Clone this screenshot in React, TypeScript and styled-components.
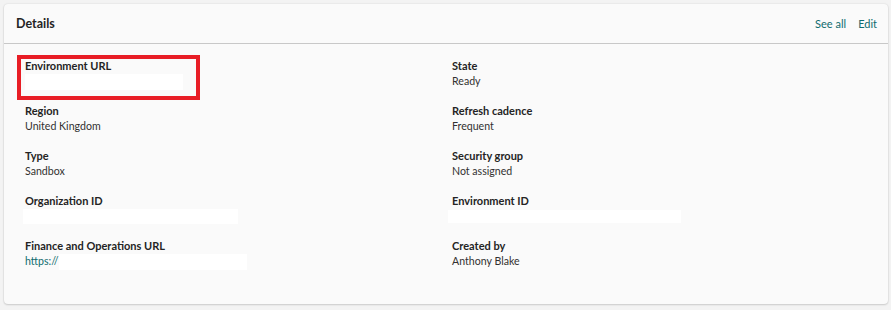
import React from "react";
import styled, { createGlobalStyle } from "styled-components";

const Global = createGlobalStyle`
  html, body { margin: 0; padding: 0; background: #f3f3f3; }
  body { font-family: Lato, "Open Sans", sans-serif; color: #323130; }
  * { box-sizing: border-box; }
`;

const Page = styled.div`
  padding: 4px;
  width: 891px;
  height: 310px;
`;

const Card = styled.section`
  width: 884px;
  height: 300px;
  background: #fafafa;
  border-radius: 4px;
  box-shadow: 0 0 2px rgba(0, 0, 0, 0.12), 0 1px 2px rgba(0, 0, 0, 0.14);
  display: flex;
  flex-direction: column;
`;

const Header = styled.header`
  height: 40px;
  display: flex;
  align-items: center;
  justify-content: space-between;
  padding: 0 11px 0 12px;
  border-bottom: 1px solid #c8c8c8;
`;

const Title = styled.h2`
  margin: 0;
  font-size: 12.5px;
  font-weight: 700;
  color: #242424;
  line-height: 16px;
`;

const Actions = styled.div`
  display: flex;
  gap: 12px;
`;

const LinkButton = styled.a`
  font-size: 11px;
  color: #0f6b6e;
  text-decoration: none;
  line-height: 16px;
  cursor: pointer;
`;

const Body = styled.div`
  display: grid;
  grid-template-columns: 427px 1fr;
  row-gap: 14px;
  padding: 14px 21px 0 21px;
`;

const Item = styled.div`
  position: relative;
  display: flex;
  flex-direction: column;
`;

const Label = styled.div`
  font-size: 11px;
  font-weight: 700;
  line-height: 16px;
  color: #242424;
`;

const Value = styled.div`
  font-size: 10.6px;
  line-height: 15px;
  height: 15px;
  display: flex;
  align-items: center;
  color: #323130;
`;

const ValueLink = styled.span`
  color: #0f6b6e;
`;

const Redact = styled.span<{ $w: number; $h: number; $shift: number }>`
  display: inline-block;
  width: ${(p) => p.$w}px;
  height: ${(p) => p.$h}px;
  margin-left: ${(p) => p.$shift}px;
  background: #ffffff;
`;

const Highlight = styled.div`
  position: absolute;
  left: -8px;
  top: -3px;
  width: 183px;
  height: 45px;
  border: 4px solid #e81d25;
  pointer-events: none;
`;

export default function App() {
  return (
    <>
      <Global />
      <Page>
        <Card>
          <Header>
            <Title>Details</Title>
            <Actions>
              <LinkButton>See all</LinkButton>
              <LinkButton>Edit</LinkButton>
            </Actions>
          </Header>
          <Body>
            <Item>
              <Label>Environment URL</Label>
              <Value>
                <Redact $w={158} $h={16} $shift={0} />
              </Value>
              <Highlight />
            </Item>
            <Item>
              <Label>State</Label>
              <Value>Ready</Value>
            </Item>
            <Item>
              <Label>Region</Label>
              <Value>United Kingdom</Value>
            </Item>
            <Item>
              <Label>Refresh cadence</Label>
              <Value>Frequent</Value>
            </Item>
            <Item>
              <Label>Type</Label>
              <Value>Sandbox</Value>
            </Item>
            <Item>
              <Label>Security group</Label>
              <Value>Not assigned</Value>
            </Item>
            <Item>
              <Label>Organization ID</Label>
              <Value>
                <Redact $w={215} $h={15} $shift={-2} />
              </Value>
            </Item>
            <Item>
              <Label>Environment ID</Label>
              <Value>
                <Redact $w={233} $h={13} $shift={-4} />
              </Value>
            </Item>
            <Item>
              <Label>Finance and Operations URL</Label>
              <Value>
                <ValueLink>https://</ValueLink>
                <Redact $w={188} $h={16} $shift={1} />
              </Value>
            </Item>
            <Item>
              <Label>Created by</Label>
              <Value>Anthony Blake</Value>
            </Item>
          </Body>
        </Card>
      </Page>
    </>
  );
}
